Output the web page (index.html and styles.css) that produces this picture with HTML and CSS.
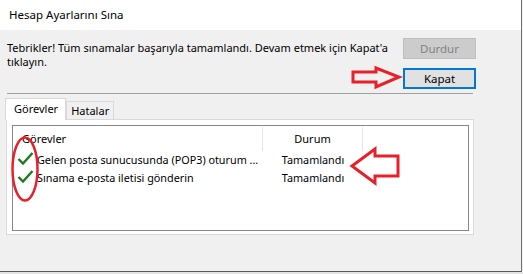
FILE: index.html
```html
<!DOCTYPE html>
<html lang="tr">
<head>
<meta charset="utf-8">
<title>Hesap Ayarlarını Sına</title>
<link rel="stylesheet" href="styles.css">
</head>
<body>
<div class="window">
  <div class="titlebar">Hesap Ayarlarını Sına</div>
  <div class="content">
    <div class="top">
      <p class="msg">Tebrikler! Tüm sınamalar başarıyla tamamlandı. Devam etmek için Kapat'a<br>tıklayın.</p>
      <div class="buttons">
        <button class="btn btn-disabled" disabled>Durdur</button>
        <button class="btn btn-default">Kapat</button>
      </div>
    </div>
    <div class="sep"></div>
    <div class="tabs">
      <div class="tab tab-active">Görevler</div>
      <div class="tab">Hatalar</div>
    </div>
    <div class="panel">
      <div class="list">
        <div class="row head">
          <div class="c1">Görevler</div>
          <div class="c2">Durum</div>
          <div class="c3"></div>
        </div>
        <div class="row item">
          <div class="c1"><svg class="check" viewBox="0 0 17 15" width="17" height="15"><path d="M1.5 8 L6 12.5 L15.5 2" fill="none" stroke="#1a7d1a" stroke-width="2.4"/></svg><span>Gelen posta sunucusunda (POP3) oturum ...</span></div>
          <div class="c2">Tamamlandı</div>
        </div>
        <div class="row item">
          <div class="c1"><svg class="check" viewBox="0 0 17 15" width="17" height="15"><path d="M1.5 8 L6 12.5 L15.5 2" fill="none" stroke="#1a7d1a" stroke-width="2.4"/></svg><span>Sınama e-posta iletisi gönderin</span></div>
          <div class="c2">Tamamlandı</div>
        </div>
      </div>
    </div>
  </div>
  <svg class="annot" width="521" height="271" viewBox="0 0 521 271">
    <polygon points="353,72 376,72 376,68 399,77 376,87 376,82 353,82" fill="none" stroke="#e8202a" stroke-width="3"/>
    <polygon points="352,166 375,149 375,156 398,156 398,176 375,176 375,183" fill="none" stroke="#e8202a" stroke-width="3"/>
    <ellipse cx="25" cy="169" rx="12.5" ry="31.5" fill="none" stroke="#e8202a" stroke-width="2.5"/>
  </svg>
</div>
<div class="behind"></div>
</body>
</html>
```
FILE: styles.css
```css
html, body {
  margin: 0;
  padding: 0;
}
body {
  width: 523px;
  height: 274px;
  background: #f0f0f0;
  font-family: "Noto Sans", "Open Sans", sans-serif;
  font-size: 11px;
  color: #000;
  overflow: hidden;
}
.window {
  position: relative;
  width: 521px;
  height: 271px;
  border-right: 1px solid #707070;
  border-bottom: 1px solid #5a5a5a;
  background: #f0f0f0;
}
.titlebar {
  height: 30px;
  line-height: 30px;
  padding-left: 9px;
  background: #fff;
  font-size: 11.5px;
}
.top {
  display: flex;
  justify-content: space-between;
  padding: 8px 45px 0 7px;
}
.msg {
  margin: 3px 0 0;
  line-height: 14px;
  white-space: nowrap;
}
.buttons {
  display: flex;
  flex-direction: column;
  gap: 9px;
}
.btn {
  box-sizing: border-box;
  width: 73px;
  height: 21px;
  font: inherit;
  font-size: 11.5px;
  padding: 0;
}
.btn-disabled {
  background: #cccccc;
  border: 1px solid #bfbfbf;
  color: #838383;
}
.btn-default {
  background: #e1e1e1;
  border: 2px solid #0078d7;
  color: #000;
}
.sep {
  margin: 4px 48px 0 7px;
  height: 1px;
  background: #a0a0a0;
}
.tabs {
  display: flex;
  align-items: flex-end;
  margin: 4px 0 0 5px;
  height: 21px;
  position: relative;
  z-index: 1;
  font-size: 11px;
}
.tab {
  box-sizing: border-box;
  height: 18px;
  line-height: 17px;
  padding: 0 4px 0 4px;
  border: 1px solid #d9d9d9;
  border-bottom: none;
  background: #f0f0f0;
}
.tab-active {
  height: 22px;
  line-height: 20px;
  padding: 0 7px 0 8px;
  background: #fff;
  margin-bottom: -1px;
}
.panel {
  box-sizing: border-box;
  width: 468px;
  height: 116px;
  margin-left: 6px;
  border: 1px solid #d9d9d9;
  background: #fff;
  padding: 5px 4px 4px 5px;
}
.list {
  box-sizing: border-box;
  height: 106px;
  border: 1px solid #828790;
  background: #fff;
  font-size: 10.8px;
}
.row {
  display: flex;
}
.head {
  height: 24px;
  line-height: 24px;
  margin-top: 1px;
  font-size: 11px;
}
.head .c1 {
  padding-left: 9px;
}
.head .c1, .head .c2 {
  border-right: 1px solid #e5e5e5;
}
.c1 {
  box-sizing: border-box;
  width: 250px;
  display: flex;
  align-items: center;
  white-space: nowrap;
}
.c2 {
  box-sizing: border-box;
  width: 100px;
  text-align: center;
}
.c3 {
  width: 1px;
}
.item {
  height: 18px;
  line-height: 18px;
}
.item .c1 {
  padding-left: 4px;
}
.check {
  flex: none;
  margin-right: 3px;
  margin-top: -3px;
}
.annot {
  position: absolute;
  left: 0;
  top: 0;
  pointer-events: none;
}
.behind {
  height: 2px;
  background: #e4e4e4;
}
```
